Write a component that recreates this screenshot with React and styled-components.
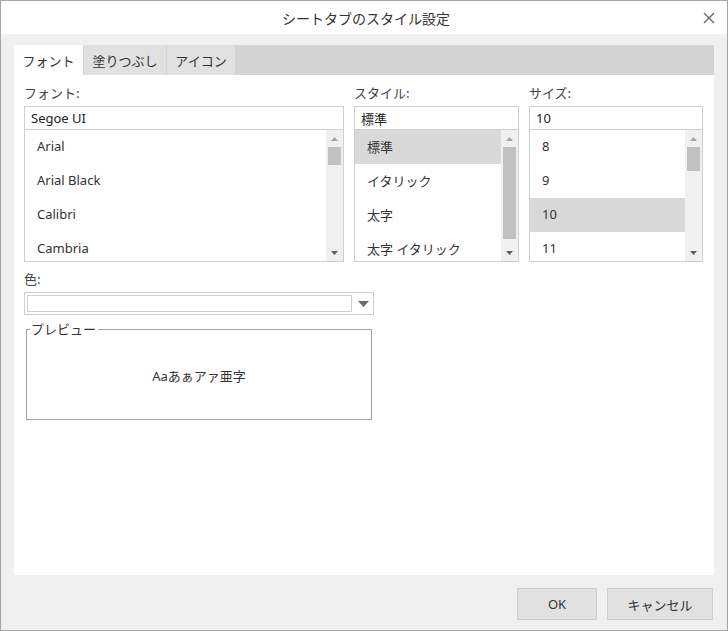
import React from 'react';
import styled, { createGlobalStyle } from 'styled-components';

const GlobalStyle = createGlobalStyle`
  html, body {
    margin: 0;
    padding: 0;
    background: #fff;
  }
  body {
    font-family: "Noto Sans", "Noto Sans CJK JP", sans-serif;
    font-size: 13px;
    color: #333;
  }
  * { box-sizing: border-box; }
`;

const Dialog = styled.div`
  width: 728px;
  height: 631px;
  border: 1px solid #a6a6a6;
  display: flex;
  flex-direction: column;
  background: #f0f0f0;
`;

const TitleBar = styled.div`
  height: 33px;
  flex: none;
  background: #fff;
  display: flex;
  align-items: center;
  justify-content: center;
  position: relative;
`;

const Title = styled.div`
  font-family: "Noto Sans CJK JP", sans-serif;
  font-size: 14px;
  color: #333;
  padding-left: 4px;
`;

const CloseButton = styled.button`
  position: absolute;
  right: 8px;
  top: 7px;
  width: 20px;
  height: 20px;
  border: none;
  background: transparent;
  padding: 0;
  display: flex;
  align-items: center;
  justify-content: center;
`;

const Body = styled.div`
  flex: 1;
  padding: 11px 13px 0 13px;
  display: flex;
  flex-direction: column;
`;

const Panel = styled.div`
  height: 530px;
  background: #fff;
  display: flex;
  flex-direction: column;
`;

const TabStrip = styled.div`
  height: 30px;
  flex: none;
  background: #d3d3d3;
  display: flex;
  gap: 1px;
`;

const Tab = styled.div`
  width: ${p => p.$w}px;
  background: ${p => (p.$active ? '#fff' : '#e1e1e1')};
  display: flex;
  align-items: center;
  justify-content: center;
  font-family: "Noto Sans CJK JP", sans-serif;
  font-size: 13px;
  color: #333;
`;

const Content = styled.div`
  padding: 6px 11px 0 10px;
  display: flex;
  flex-direction: column;
`;

const Columns = styled.div`
  display: flex;
  gap: 10px;
`;

const Column = styled.div`
  width: ${p => p.$w}px;
  display: flex;
  flex-direction: column;
`;

const Label = styled.div`
  height: ${p => p.$h || 25}px;
  display: flex;
  align-items: flex-end;
  padding-bottom: 4px;
  font-family: "Noto Sans CJK JP", sans-serif;
  font-size: 13px;
  color: #444;
  padding-top: ${p => p.$shift || 0}px;
`;

const TextBox = styled.div`
  height: 24px;
  border: 1px solid #cfcfcf;
  display: flex;
  align-items: center;
  padding-left: 6px;
  font-size: 13px;
  color: #222;
`;

const ListBox = styled.div`
  height: 132px;
  border: 1px solid #cfcfcf;
  border-top: none;
  display: flex;
  overflow: hidden;
`;

const Items = styled.div`
  flex: 1;
  display: flex;
  flex-direction: column;
`;

const Item = styled.div`
  height: 34px;
  flex: none;
  display: flex;
  align-items: center;
  padding: 0 0 2px 12px;
  background: ${p => (p.$selected ? '#d9d9d9' : 'transparent')};
  font-size: 13px;
  color: #333;
`;

const ScrollBar = styled.div`
  width: 17px;
  flex: none;
  background: #f0f0f0;
  display: flex;
  flex-direction: column;
  align-items: center;
`;

const Arrow = styled.div`
  height: 17px;
  flex: none;
  width: 100%;
  display: flex;
  align-items: center;
  justify-content: center;
`;

const Track = styled.div`
  flex: 1;
  width: 100%;
  padding: 0 2px;
`;

const Thumb = styled.div`
  height: ${p => p.$h}px;
  background: #c1c1c1;
`;

const ColorRow = styled.div`
  width: 350px;
  height: 23px;
  border: 1px solid #cfcfcf;
  display: flex;
  align-items: center;
  padding: 2px;
`;

const ColorField = styled.div`
  width: 325px;
  height: 17px;
  border: 1px solid #cfcfcf;
`;

const DropButton = styled.div`
  flex: 1;
  height: 100%;
  display: flex;
  align-items: center;
  justify-content: center;
  padding-left: 3px;
`;

const Preview = styled.fieldset`
  margin: 6px 0 0 2px;
  padding: 0;
  width: 346px;
  height: 99px;
  border: 1px solid #a0a0a0;
`;

const Legend = styled.legend`
  margin-left: 3px;
  padding: 0 2px 0 1px;
  font-family: "Noto Sans CJK JP", sans-serif;
  font-size: 13px;
  line-height: 16px;
  color: #333;
`;

const PreviewBody = styled.div`
  height: 82px;
  display: flex;
  align-items: center;
  justify-content: center;
`;

const Sample = styled.div`
  font-family: "Noto Sans", "Noto Sans CJK JP", sans-serif;
  font-size: 13px;
  color: #333;
  padding-bottom: 6px;
`;

const Footer = styled.div`
  height: 55px;
  flex: none;
  display: flex;
  justify-content: flex-end;
  align-items: flex-start;
  gap: 10px;
  padding: 13px 14px 0 0;
`;

const Button = styled.button`
  width: ${p => p.$w}px;
  height: 32px;
  background: #e1e1e1;
  border: 1px solid #cdcdcd;
  font-family: "Noto Sans", "Noto Sans CJK JP", sans-serif;
  font-size: 13px;
  color: #333;
  padding: 0;
`;

const UpArrow = () => (
  <svg width="7" height="4" viewBox="0 0 7 4"><path d="M0 4 L3.5 0 L7 4 Z" fill="#a3a3a3" /></svg>
);
const DownArrow = ({ color = '#606060', w = 7, h = 4 }) => (
  <svg width={w} height={h} viewBox={`0 0 ${w} ${h}`}><path d={`M0 0 L${w} 0 L${w / 2} ${h} Z`} fill={color} /></svg>
);

const List = ({ items, selected, thumbH }) => (
  <ListBox>
    <Items>
      {items.map(it => (
        <Item key={it} $selected={it === selected}>{it}</Item>
      ))}
    </Items>
    <ScrollBar>
      <Arrow><UpArrow /></Arrow>
      <Track>
        <Thumb $h={thumbH} />
      </Track>
      <Arrow><DownArrow /></Arrow>
    </ScrollBar>
  </ListBox>
);

export default function App() {
  return (
    <>
      <GlobalStyle />
      <Dialog>
        <TitleBar>
          <Title>シートタブのスタイル設定</Title>
          <CloseButton>
            <svg width="12" height="12" viewBox="0 0 12 12">
              <path d="M1 1 L11 11 M11 1 L1 11" stroke="#666" strokeWidth="1.3" />
            </svg>
          </CloseButton>
        </TitleBar>
        <Body>
          <Panel>
            <TabStrip>
              <Tab $w={69} $active>フォント</Tab>
              <Tab $w={82}>塗りつぶし</Tab>
              <Tab $w={68}>アイコン</Tab>
            </TabStrip>
            <Content>
              <Columns>
                <Column $w={320}>
                  <Label>フォント:</Label>
                  <TextBox>Segoe UI</TextBox>
                  <List items={['Arial', 'Arial Black', 'Calibri', 'Cambria']} thumbH={18} />
                </Column>
                <Column $w={165}>
                  <Label $shift={3}>スタイル:</Label>
                  <TextBox>標準</TextBox>
                  <List items={['標準', 'イタリック', '太字', '太字 イタリック']} selected="標準" thumbH={92} />
                </Column>
                <Column $w={174}>
                  <Label $shift={3}>サイズ:</Label>
                  <TextBox>10</TextBox>
                  <List items={['8', '9', '10', '11']} selected="10" thumbH={24} />
                </Column>
              </Columns>
              <Label $h={30}>色:</Label>
              <ColorRow>
                <ColorField />
                <DropButton><DownArrow color="#6a6a6a" w={11} h={6} /></DropButton>
              </ColorRow>
              <Preview>
                <Legend>プレビュー</Legend>
                <PreviewBody>
                  <Sample>Aaあぁアァ亜字</Sample>
                </PreviewBody>
              </Preview>
            </Content>
          </Panel>
        </Body>
        <Footer>
          <Button $w={80}>OK</Button>
          <Button $w={106}>キャンセル</Button>
        </Footer>
      </Dialog>
    </>
  );
}
